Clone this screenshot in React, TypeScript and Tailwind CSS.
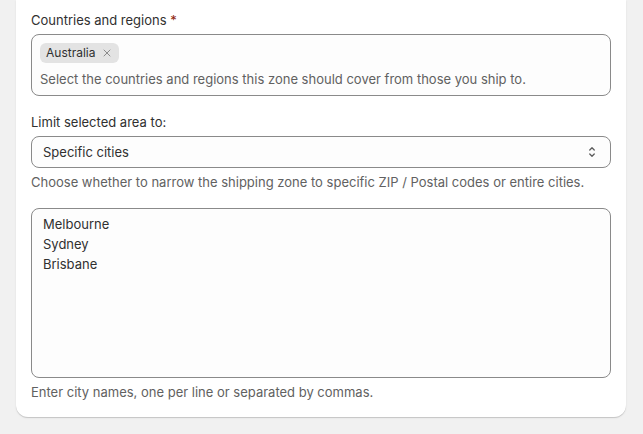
import { X } from "lucide-react";

const font = { fontFamily: "Inter, 'Noto Sans', sans-serif" };

function SelectArrows() {
  return (
    <svg width="12" height="14" viewBox="0 0 12 14" fill="none" className="text-[#5c5c5c]">
      <path d="M3.75 5 6 2.75 8.25 5" stroke="currentColor" strokeWidth="1.3" strokeLinecap="round" strokeLinejoin="round" />
      <path d="M3.75 9 6 11.25 8.25 9" stroke="currentColor" strokeWidth="1.3" strokeLinecap="round" strokeLinejoin="round" />
    </svg>
  );
}

export default function App() {
  return (
    <div className="min-h-[434px] bg-[#f1f1f1] pl-4 pr-[17px] pb-[18px] text-[13px] leading-5 text-[#303030]" style={font}>
      <div className="w-[610px] rounded-b-xl bg-white px-[15px] pt-[10px] pb-[15px] shadow-[0_1px_0_0_rgba(26,26,26,0.12),0_1px_2px_0_rgba(26,26,26,0.1)]">
        {/* Countries */}
        <label className="block">
          Countries and regions <span className="text-[#8e1f0b]">*</span>
        </label>
        <div className="mt-1 rounded-lg border border-[#8a8a8a] bg-[#fdfdfd] px-2 pt-2 pb-[6px]">
          <div className="flex">
            <span className="inline-flex h-5 items-center gap-[6px] rounded-md bg-[#e3e3e3] pl-[6px] pr-[6px] text-[12px] leading-4">
              Australia
              <X className="h-3 w-3 text-[#8a8a8a]" strokeWidth={2} />
            </span>
          </div>
          <p className="mt-[6px] text-[#616161]">
            Select the countries and regions this zone should cover from those you ship to.
          </p>
        </div>

        {/* Limit */}
        <label className="mt-4 block">Limit selected area to:</label>
        <div className="mt-1 flex h-8 items-center justify-between rounded-lg border border-[#8a8a8a] bg-[#fdfdfd] pl-[11px] pr-[12px]">
          <span>Specific cities</span>
          <SelectArrows />
        </div>
        <p className="mt-1 text-[#616161]">
          Choose whether to narrow the shipping zone to specific ZIP / Postal codes or entire cities.
        </p>

        {/* Cities */}
        <div className="mt-4 h-[170px] rounded-lg border border-[#8a8a8a] bg-[#fdfdfd] px-[11px] pt-[5px]">
          <div>Melbourne</div>
          <div>Sydney</div>
          <div>Brisbane</div>
        </div>
        <p className="mt-1 text-[#616161]">Enter city names, one per line or separated by commas.</p>
      </div>
    </div>
  );
}
